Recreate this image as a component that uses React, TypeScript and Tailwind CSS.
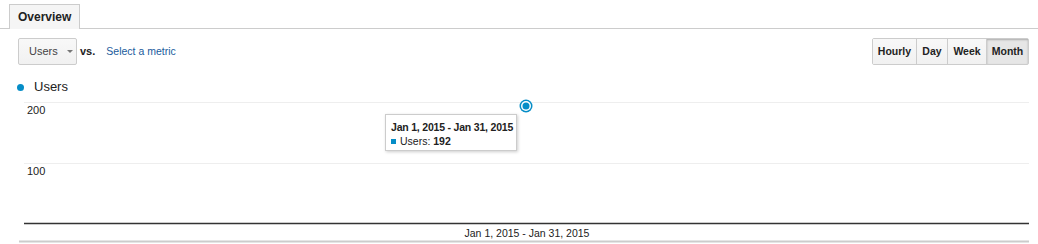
import React from "react"

const ranges = [
  { label: "Hourly", w: "w-[43px]" },
  { label: "Day", w: "w-[31px]" },
  { label: "Week", w: "w-[39px]" },
  { label: "Month", w: "w-[42px]" },
]

function Chart() {
  return (
    <div className="relative h-[149px]">
      <svg width="1038" height="149" className="block">
        <line x1="24" y1="8.5" x2="1029" y2="8.5" stroke="#eeeeee" strokeWidth="1" />
        <line x1="24" y1="69.5" x2="1029" y2="69.5" stroke="#eeeeee" strokeWidth="1" />
        <text x="27" y="20" fontSize="11" fill="#222">200</text>
        <text x="27" y="81" fontSize="11" fill="#222">100</text>
        <line x1="24" y1="129.5" x2="1029" y2="129.5" stroke="#333" strokeWidth="1.5" />
        <text x="527" y="143" fontSize="10.5" fill="#222" textAnchor="middle">Jan 1, 2015 - Jan 31, 2015</text>
        <line x1="19" y1="147.5" x2="1029" y2="147.5" stroke="#cccccc" strokeWidth="2" />
        <circle cx="526" cy="12" r="6.5" fill="#058dc7" />
        <circle cx="526" cy="12" r="5" fill="#fff" />
        <circle cx="526" cy="12" r="3.5" fill="#058dc7" />
      </svg>
      <div className="absolute left-[385px] top-[20px] w-[132px] h-[37px] bg-white border border-[#cccccc] shadow-[1px_1px_3px_rgba(0,0,0,0.2)] pl-[5px] pt-[5px] text-[10.5px] leading-[14px] text-[#222] whitespace-nowrap">
        <div className="font-bold tracking-[-0.2px]">Jan 1, 2015 - Jan 31, 2015</div>
        <div className="flex items-center">
          <span className="w-[5px] h-[5px] bg-[#058dc7] mr-[4px]"></span>
          <span>Users:&nbsp;</span>
          <span className="font-bold">192</span>
        </div>
      </div>
    </div>
  )
}

export default function App() {
  return (
    <div className="w-[1038px] h-[244px] bg-white overflow-hidden text-[#222]" style={{ fontFamily: '"Liberation Sans", Arial, sans-serif' }}>
      <div className="h-[29px] pt-[4px] pl-[9px] border-b border-[#cccccc] flex">
        <div className="h-[25px] -mb-px px-[8px] border border-b-0 border-[#cccccc] bg-[#f5f5f5] text-[12px] font-bold leading-[24px]">
          Overview
        </div>
      </div>

      <div className="mt-[9px] pl-[18px] pr-[9px] flex items-center h-[27px]">
        <div className="h-[27px] w-[59px] flex items-center pl-[10px] border border-[#cccccc] rounded-[2px] bg-gradient-to-b from-[#f8f8f8] to-[#f1f1f1] text-[11px] text-[#444]">
          <span>Users</span>
          <span className="ml-[9px] w-0 h-0 border-l-[3px] border-r-[3px] border-t-[3px] border-l-transparent border-r-transparent border-t-[#777]"></span>
        </div>
        <span className="ml-[3px] text-[11px] font-bold">vs.</span>
        <span className="ml-[11px] text-[10.5px] text-[#1a5b9c]">Select a metric</span>
        <div className="ml-auto flex h-[27px] border border-[#cccccc] rounded-[2px] text-[10.5px] font-bold">
          {ranges.map((r, i) => (
            <div
              key={r.label}
              className={
                r.w +
                (i > 0 ? " border-l border-[#cccccc]" : "") +
                (r.label === "Month"
                  ? " bg-[#e6e6e6] shadow-[inset_0_1px_2px_rgba(0,0,0,0.25)]"
                  : " bg-gradient-to-b from-[#f8f8f8] to-[#f1f1f1]") +
                " flex items-center justify-center"
              }
            >
              {r.label}
            </div>
          ))}
        </div>
      </div>

      <div className="mt-[15px] pl-[17px] flex items-center h-[14px] text-[13px]">
        <span className="w-[7px] h-[7px] rounded-full bg-[#058dc7] mr-[10px]"></span>
        <span>Users</span>
      </div>

      <Chart />
    </div>
  )
}
